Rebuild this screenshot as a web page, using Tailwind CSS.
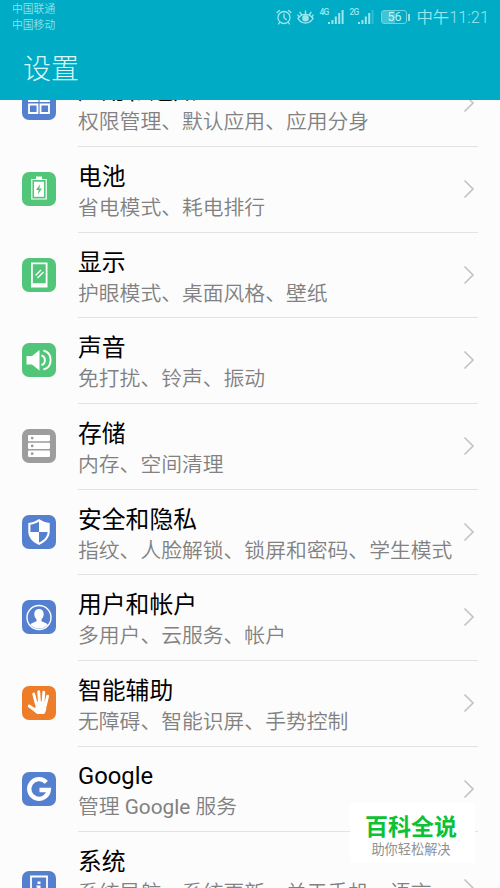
<!doctype html>
<html lang="zh-CN">
  <head>
    <meta charset="UTF-8" />
    <meta name="viewport" content="width=device-width, initial-scale=1.0" />
    <title>设置</title>
    <script src="https://cdn.jsdelivr.net/npm/@tailwindcss/browser@4"></script>
  </head>
  <body class="relative h-[888px] w-[500px] overflow-hidden bg-[#fcfcfc] font-['Roboto','Noto_Sans_CJK_SC',sans-serif]">
    <header class="relative z-10 h-[100px] bg-[#00acc5]">
      <div class="flex h-[34px] justify-between pl-3 pr-[11px]">
        <div class="pt-[2px] text-[10.8px] leading-[15.5px] font-[350] text-[#92e0e9]">
          <div>中国联通</div>
          <div>中国移动</div>
        </div>
        <div class="flex h-[34px] items-center text-[#9ce5ed]">
          <svg class="mr-[5px]" width="16" height="16" viewBox="0 0 16 16" fill="none" stroke="currentColor" stroke-width="1.3" stroke-linecap="round">
            <circle cx="8" cy="8.5" r="6" />
            <path d="M8 5v3.7l2.3 1.8M1 3.6 3.5 1.4M15 3.6 12.5 1.4M3.7 13.3 2.5 15M12.3 13.3 13.5 15" />
          </svg>
          <svg class="mr-[5px]" width="17" height="16" viewBox="0 0 17 16" fill="none" stroke="currentColor" stroke-width="1.4" stroke-linecap="round">
            <path d="M1 9.5C4.5 4 12.5 4 16 9.5 12.5 15.500 4.5 15.500 1 9.5Z" />
            <circle cx="8.5" cy="9.3" r="2.6" fill="currentColor" />
            <path d="M8.5 4.5V2M4.5 5.5 3 3.3M12.5 5.5 14 3.3M1.8 7.5.9 6M15.2 7.5 16.1 6" />
          </svg>
          <span class="-mt-[9px] w-[9px] text-[8.5px] leading-none font-medium tracking-[-0.8px]">4G</span>
          <svg class="mr-[5px]" width="16" height="16" viewBox="0 0 16 16" fill="currentColor">
            <path d="M0 13h2v2H0zM3.4 11h2v4h-2zM6.8 7.5h2V15h-2zM10.2 4h2v11h-2zM13.6 1h2v14h-2z" />
          </svg>
          <span class="-mt-[9px] w-[9px] text-[8.5px] leading-none font-medium tracking-[-0.8px]">2G</span>
          <svg class="mr-[7px]" width="16" height="16" viewBox="0 0 16 16" fill="currentColor">
            <path d="M0 13h2v2H0zM3.4 11h2v4h-2zM6.8 7.5h2V15h-2zM10.2 4h2v11h-2z" />
            <path d="M13.6 1h2v14h-2z" opacity=".3" />
          </svg>
          <div class="flex h-[14px] w-[26px] items-center justify-center rounded-[3px] border border-[#6fd3df] bg-linear-to-r from-[#6fd3df]/60 from-55% to-transparent to-55% text-[12.5px] leading-none text-[#c3f2f6]">56</div>
          <div class="mr-[6px] ml-px h-[7px] w-[2px] bg-[#8edfe8]"></div>
          <span class="pt-[2px] text-[16.4px] leading-none font-[350]">中午11:21</span>
        </div>
      </div>
      <h1 class="pt-px pl-[23px] text-[28px] leading-[70px] font-light text-[#dcfafa]">设置</h1>
    </header>

    <main class="-mt-[38.7px]">
      <section class="flex h-[85.67px] pl-[22px]">
        <svg class="mt-[25px] mr-[22px] shrink-0" width="34" height="34" viewBox="0 0 34 34" fill="none">
          <rect width="34" height="34" rx="7" fill="#5580cf" />
          <path d="M7 7h8.5v8H7zM18.5 7H27v8h-8.5zM7 18.5h8.5v8.5H7zM18.5 18.5H27v8.5h-8.5z" stroke="#fff" stroke-width="1.8" />
        </svg>
        <div class="flex w-[400px] border-b border-[#e2e2e2]">
          <div class="grow whitespace-nowrap pt-[13px]">
            <h2 class="text-[23.8px] leading-[34px] text-black">应用和通知</h2>
            <p class="text-[20.8px] leading-[28px] font-[350] text-[#818181]">权限管理、默认应用、应用分身</p>
          </div>
          <svg class="mt-[32px] mr-[3px] shrink-0" width="12" height="20" viewBox="0 0 12 20" fill="none" stroke="#c4c4c4" stroke-width="1.7"><path d="m1.500 1.500 8.500 8.500-8.500 8.500" /></svg>
        </div>
      </section>

      <section class="flex h-[85.67px] pl-[22px]">
        <svg class="mt-[25px] mr-[22px] shrink-0" width="34" height="34" viewBox="0 0 34 34" fill="none">
          <rect width="34" height="34" rx="7" fill="#52c678" />
          <path d="M14 4.5h6v2.500h-6z" fill="#fff" />
          <path d="M9.8 7.5h14.400v19.500H9.8z" stroke="#fff" stroke-width="1.2" />
          <path d="M12 9.7h10v15.100H12z" fill="#fff" />
          <path d="m18.2 12-4.200 6h2.700l-.9 4.500 4.200-6h-2.700z" fill="#52c678" />
        </svg>
        <div class="flex w-[400px] border-b border-[#e2e2e2]">
          <div class="grow whitespace-nowrap pt-[13px]">
            <h2 class="text-[23.8px] leading-[34px] text-black">电池</h2>
            <p class="text-[20.8px] leading-[28px] font-[350] text-[#818181]">省电模式、耗电排行</p>
          </div>
          <svg class="mt-[32px] mr-[3px] shrink-0" width="12" height="20" viewBox="0 0 12 20" fill="none" stroke="#c4c4c4" stroke-width="1.7"><path d="m1.500 1.500 8.500 8.500-8.500 8.500" /></svg>
        </div>
      </section>

      <section class="flex h-[85.67px] pl-[22px]">
        <svg class="mt-[25px] mr-[22px] shrink-0" width="34" height="34" viewBox="0 0 34 34" fill="none">
          <rect width="34" height="34" rx="7" fill="#52c678" />
          <path fill-rule="evenodd" d="M9 4.500h16.500v25H9zM10.800 6.300v19h12.900v-19z" fill="#fff" />
          <path d="m13.500 17.500 5.500-5.500M15.500 20l6-6" stroke="#fff" stroke-width="1.3" />
        </svg>
        <div class="flex w-[400px] border-b border-[#e2e2e2]">
          <div class="grow whitespace-nowrap pt-[13px]">
            <h2 class="text-[23.8px] leading-[34px] text-black">显示</h2>
            <p class="text-[20.8px] leading-[28px] font-[350] text-[#818181]">护眼模式、桌面风格、壁纸</p>
          </div>
          <svg class="mt-[32px] mr-[3px] shrink-0" width="12" height="20" viewBox="0 0 12 20" fill="none" stroke="#c4c4c4" stroke-width="1.7"><path d="m1.500 1.500 8.500 8.500-8.500 8.500" /></svg>
        </div>
      </section>

      <section class="flex h-[85.67px] pl-[22px]">
        <svg class="mt-[25px] mr-[22px] shrink-0" width="34" height="34" viewBox="0 0 34 34" fill="none">
          <rect width="34" height="34" rx="7" fill="#52c678" />
          <path d="M4.500 13h5.500l7.500-6v20.500L10 21.500H4.500z" fill="#fff" />
          <path d="M19.500 12.500c4.500 1 4.500 8.500 0 9.500M21.500 7.500c9.500 2.500 9.500 16.500 0 19" stroke="#fff" stroke-width="1.9" />
        </svg>
        <div class="flex w-[400px] border-b border-[#e2e2e2]">
          <div class="grow whitespace-nowrap pt-[13px]">
            <h2 class="text-[23.8px] leading-[34px] text-black">声音</h2>
            <p class="text-[20.8px] leading-[28px] font-[350] text-[#818181]">免打扰、铃声、振动</p>
          </div>
          <svg class="mt-[32px] mr-[3px] shrink-0" width="12" height="20" viewBox="0 0 12 20" fill="none" stroke="#c4c4c4" stroke-width="1.7"><path d="m1.500 1.500 8.500 8.500-8.500 8.500" /></svg>
        </div>
      </section>

      <section class="flex h-[85.67px] pl-[22px]">
        <svg class="mt-[25px] mr-[22px] shrink-0" width="34" height="34" viewBox="0 0 34 34" fill="none">
          <rect width="34" height="34" rx="7" fill="#9d9d9d" />
          <rect x="6" y="6" width="22" height="6.3" rx="1" fill="#fff" />
          <rect x="6" y="13.8" width="22" height="6.3" rx="1" fill="#fff" />
          <rect x="6" y="21.6" width="22" height="6.3" rx="1" fill="#fff" />
          <g fill="#9d9d9d">
            <circle cx="10.2" cy="9.1" r="1.4" />
            <circle cx="10.2" cy="16.9" r="1.4" />
            <circle cx="10.2" cy="24.7" r="1.4" />
          </g>
        </svg>
        <div class="flex w-[400px] border-b border-[#e2e2e2]">
          <div class="grow whitespace-nowrap pt-[13px]">
            <h2 class="text-[23.8px] leading-[34px] text-black">存储</h2>
            <p class="text-[20.8px] leading-[28px] font-[350] text-[#818181]">内存、空间清理</p>
          </div>
          <svg class="mt-[32px] mr-[3px] shrink-0" width="12" height="20" viewBox="0 0 12 20" fill="none" stroke="#c4c4c4" stroke-width="1.7"><path d="m1.500 1.500 8.500 8.500-8.500 8.500" /></svg>
        </div>
      </section>

      <section class="flex h-[85.67px] pl-[22px]">
        <svg class="mt-[25px] mr-[22px] shrink-0" width="34" height="34" viewBox="0 0 34 34" fill="none">
          <rect width="34" height="34" rx="7" fill="#5580cf" />
          <path d="M17 4c3.500 2.500 6.500 3.500 10.700 4v8.500c0 6-4.200 10.500-10.700 13.500-6.500-3-10.700-7.500-10.700-13.500V8C10.500 7.500 13.500 6.500 17 4z" fill="#fff" />
          <path d="M17 6.500V17H8.400V9.700C11.500 9.300 14.500 8.300 17 6.500zM17 17h8.600c-.2 4.800-3.600 8.200-8.600 10.600z" fill="#5580cf" />
        </svg>
        <div class="flex w-[400px] border-b border-[#e2e2e2]">
          <div class="grow whitespace-nowrap pt-[13px]">
            <h2 class="text-[23.8px] leading-[34px] text-black">安全和隐私</h2>
            <p class="text-[20.8px] leading-[28px] font-[350] text-[#818181]">指纹、人脸解锁、锁屏和密码、学生模式</p>
          </div>
          <svg class="mt-[32px] mr-[3px] shrink-0" width="12" height="20" viewBox="0 0 12 20" fill="none" stroke="#c4c4c4" stroke-width="1.7"><path d="m1.500 1.500 8.500 8.500-8.500 8.500" /></svg>
        </div>
      </section>

      <section class="flex h-[85.67px] pl-[22px]">
        <svg class="mt-[25px] mr-[22px] shrink-0" width="34" height="34" viewBox="0 0 34 34" fill="none">
          <rect width="34" height="34" rx="7" fill="#5580cf" />
          <circle cx="17" cy="17.5" r="12" stroke="#fff" stroke-width="1.4" />
          <path d="M17 9c3 0 4.700 2.200 4.700 5 0 2.400-.9 4-2.200 5.200v2c2.500 1.200 4.800 1.700 6.200 3.300A11 11 0 0 1 17 28.500a11 11 0 0 1-8.700-4c1.400-1.600 3.700-2.100 6.200-3.300v-2c-1.300-1.200-2.200-2.800-2.200-5.200 0-2.800 1.700-5 4.700-5z" fill="#fff" />
        </svg>
        <div class="flex w-[400px] border-b border-[#e2e2e2]">
          <div class="grow whitespace-nowrap pt-[13px]">
            <h2 class="text-[23.8px] leading-[34px] text-black">用户和帐户</h2>
            <p class="text-[20.8px] leading-[28px] font-[350] text-[#818181]">多用户、云服务、帐户</p>
          </div>
          <svg class="mt-[32px] mr-[3px] shrink-0" width="12" height="20" viewBox="0 0 12 20" fill="none" stroke="#c4c4c4" stroke-width="1.7"><path d="m1.500 1.500 8.500 8.500-8.500 8.500" /></svg>
        </div>
      </section>

      <section class="flex h-[85.67px] pl-[22px]">
        <svg class="mt-[25px] mr-[22px] shrink-0" width="34" height="34" viewBox="0 0 34 34" fill="none">
          <rect width="34" height="34" rx="7" fill="#ed7d28" />
          <path d="m11.700 8 2.600 10M16.700 5.800l.8 11M21.800 6.300 21 17M25.600 10.200 23.500 19M7.200 20l6.300 4.500" stroke="#fff" stroke-width="2.9" stroke-linecap="round" />
          <path d="M12.900 15.500h11.900l-.5 7c-.4 3-1.300 4.500-2.300 5.500h-6.500c-2.500-1.200-4.500-3.500-6-5.500l4.200-1z" fill="#fff" />
        </svg>
        <div class="flex w-[400px] border-b border-[#e2e2e2]">
          <div class="grow whitespace-nowrap pt-[13px]">
            <h2 class="text-[23.8px] leading-[34px] text-black">智能辅助</h2>
            <p class="text-[20.8px] leading-[28px] font-[350] text-[#818181]">无障碍、智能识屏、手势控制</p>
          </div>
          <svg class="mt-[32px] mr-[3px] shrink-0" width="12" height="20" viewBox="0 0 12 20" fill="none" stroke="#c4c4c4" stroke-width="1.7"><path d="m1.500 1.500 8.500 8.500-8.500 8.500" /></svg>
        </div>
      </section>

      <section class="flex h-[85.67px] pl-[22px]">
        <svg class="mt-[25px] mr-[22px] shrink-0" width="34" height="34" viewBox="0 0 34 34" fill="none">
          <rect width="34" height="34" rx="7" fill="#5580cf" />
          <path d="M24.300 10.400A9.800 9.800 0 1 0 26.800 18H17.500" stroke="#fff" stroke-width="4.3" />
        </svg>
        <div class="flex w-[400px] border-b border-[#e2e2e2]">
          <div class="grow whitespace-nowrap pt-[12px]">
            <h2 class="text-[23.8px] leading-[34px] text-black">Google</h2>
            <p class="text-[20.8px] leading-[28px] font-[350] text-[#818181]">管理 <span class="font-normal">Google</span> 服务</p>
          </div>
          <svg class="mt-[32px] mr-[3px] shrink-0" width="12" height="20" viewBox="0 0 12 20" fill="none" stroke="#c4c4c4" stroke-width="1.7"><path d="m1.500 1.500 8.500 8.500-8.500 8.500" /></svg>
        </div>
      </section>

      <section class="flex h-[85.67px] pl-[22px]">
        <svg class="mt-[39px] mr-[22px] shrink-0" width="34" height="34" viewBox="0 0 34 34" fill="none">
          <rect width="34" height="34" rx="7" fill="#5580cf" />
          <path d="M9 5.500h16v24H9z" stroke="#fff" stroke-width="1.8" />
          <path d="M15.500 10.500h3v2.500h-3zM14.500 14.500h4V22h-3v-5.500h-1z" fill="#fff" />
        </svg>
        <div class="flex w-[400px]">
          <div class="grow whitespace-nowrap pt-[13px]">
            <h2 class="text-[23.8px] leading-[34px] text-black">系统</h2>
            <p class="text-[20.8px] leading-[28px] font-[350] text-[#818181]">系统导航、系统更新、关于手机、语言</p>
          </div>
          <svg class="mt-[46px] mr-[3px] shrink-0" width="12" height="20" viewBox="0 0 12 20" fill="none" stroke="#c4c4c4" stroke-width="1.7"><path d="m1.500 1.500 8.500 8.500-8.500 8.500" /></svg>
        </div>
      </section>
    </main>

    <!-- watermark -->
    <div class="absolute top-[803px] left-[350px] h-[60px] w-[125px] bg-white pt-[11px] pr-[3px] text-center">
      <div class="text-[23px] leading-[28px] font-bold text-[#0cc133]">百科全说</div>
      <div class="text-[13.2px] leading-[16px] text-[#8f8f8f]">助你轻松解决</div>
    </div>
  </body>
</html>
